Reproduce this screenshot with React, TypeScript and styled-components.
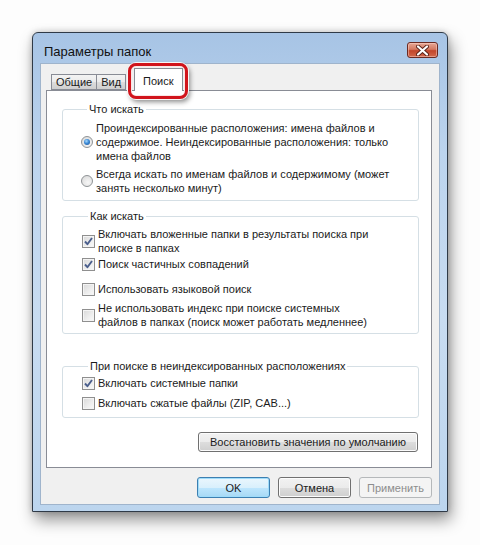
import styled, { createGlobalStyle } from 'styled-components'

const GlobalStyle = createGlobalStyle`
  html, body {
    margin: 0;
    background: #fdfdfd;
  }
  body {
    font-family: "Liberation Sans", Arial, sans-serif;
    font-size: 11px;
    color: #1b1b1b;
  }
`;

const Page = styled.div`
  width: 480px;
  height: 545px;
  padding: 32px 0 0 32px;
  box-sizing: border-box;
`;

const Window = styled.div`
  width: 416px;
  height: 480px;
  box-sizing: border-box;
  border: 1px solid #2f3a47;
  border-radius: 6px 6px 0 0;
  background: linear-gradient(180deg, #a7c4e5 0%, #bcd4ee 25%, #c8dcf1 60%, #bcd5ee 100%);
  box-shadow: 3px 8px 16px rgba(0, 0, 0, 0.42), 0 0 6px rgba(0, 0, 0, 0.2);
  display: flex;
  flex-direction: column;
`;

const TitleBar = styled.div`
  height: 30px;
  display: flex;
  align-items: flex-start;
  justify-content: space-between;
  padding: 0 9px 0 11px;
`;

const Title = styled.span`
  margin-top: 11px;
  font-size: 13px;
  line-height: 15px;
  color: #111;
`;

const CloseButton = styled.div`
  margin-top: 9px;
  width: 31px;
  height: 16px;
  box-sizing: border-box;
  border: 1px solid #6b2a22;
  border-radius: 3px;
  background: linear-gradient(180deg, #e7a795 0%, #d57a62 45%, #c2452a 55%, #d2684c 100%);
  box-shadow: inset 0 0 0 1px rgba(255, 220, 210, 0.45);
  display: flex;
  align-items: center;
  justify-content: center;
`;

const Client = styled.div`
  flex: 1;
  margin: 0 7px 6px 7px;
  border: 1px solid #9fb4cc;
  background: #f0f0f0;
  padding: 0 7px 0 5px;
  display: flex;
  flex-direction: column;
`;

const TabRow = styled.div`
  height: 26px;
  display: flex;
  align-items: flex-end;
  padding-left: 5px;
`;

const Tab = styled.div<{ $active?: boolean }>`
  position: relative;
  box-sizing: border-box;
  height: ${({ $active }) => ($active ? '23px' : '16px')};
  padding: ${({ $active }) => ($active ? '2px 8px 0' : '0 4px')};
  margin: ${({ $active }) => ($active ? '0 0 -1px 8px' : '0')};
  border: 1px solid #898c95;
  border-bottom: ${({ $active }) => ($active ? 'none' : '1px solid #898c95')};
  border-right: ${({ $active }) => ($active ? '1px solid #898c95' : 'none')};
  background: ${({ $active }) =>
    $active ? '#fff' : 'linear-gradient(180deg, #f3f3f3 0%, #ebebeb 50%, #dddddd 51%, #cfcfcf 100%)'};
  z-index: ${({ $active }) => ($active ? 2 : 1)};
  line-height: 14px;
  display: flex;
  align-items: center;
  color: #1b1b1b;
`;

const LastTab = styled(Tab)`
  border-right: 1px solid #898c95;
`;

const Highlight = styled.div`
  position: absolute;
  left: -7px;
  right: -6px;
  top: -6px;
  bottom: -8px;
  border: 3px solid #d1141c;
  border-radius: 8px;
  box-shadow: 0 0 0 1px #f6f6f6, 2px 3px 5px rgba(0, 0, 0, 0.45), inset 0 0 0 1px #fbe5e5;
  pointer-events: none;
`;

const Panel = styled.div`
  height: 378px;
  box-sizing: border-box;
  border: 1px solid #898c95;
  background: #fff;
  padding: 11px 12px 0 15px;
  display: flex;
  flex-direction: column;
`;

const Group = styled.fieldset<{ $top: number; $pad: string }>`
  margin: ${({ $top }) => `${$top}px 0 0 0`};
  padding: ${({ $pad }) => $pad};
  border: 1px solid #d5dfe5;
  border-radius: 3px;
  min-inline-size: 0;
  display: flex;
  flex-direction: column;
`;

const Legend = styled.legend`
  margin-left: 6px;
  padding: 0 2px;
  line-height: 14px;
  color: #1b1b1b;
`;

const Option = styled.label<{ $gap?: number }>`
  display: flex;
  align-items: center;
  gap: 3px;
  margin-top: ${({ $gap }) => $gap ?? 0}px;
  line-height: 14px;
  color: #1b1b1b;
`;

const OptionText = styled.span`
  flex: 1;
`;

const RadioMark = styled.span<{ $on?: boolean }>`
  flex: none;
  width: 12px;
  height: 12px;
  box-sizing: border-box;
  border-radius: 50%;
  border: 1px solid #8f9396;
  background: radial-gradient(circle at 60% 65%, #f7f7f7 0%, #e0e0e0 70%, #cfcfcf 100%);
  display: flex;
  align-items: center;
  justify-content: center;
  &::after {
    content: '';
    display: ${({ $on }) => ($on ? 'block' : 'none')};
    width: 6px;
    height: 6px;
    border-radius: 50%;
    background: radial-gradient(circle at 40% 35%, #a9dbff 0%, #3c8ad6 45%, #1b4f8f 100%);
  }
`;

const CheckMark = styled.span`
  flex: none;
  width: 13px;
  height: 13px;
  box-sizing: border-box;
  border: 1px solid #8f8f8f;
  background: linear-gradient(135deg, #d8d8d8 0%, #eeeeee 60%, #fafafa 100%);
  box-shadow: inset 0 0 0 1px #f4f4f4;
  display: flex;
  align-items: center;
  justify-content: center;
`;

const Button = styled.button<{ $variant?: 'default' | 'disabled' }>`
  box-sizing: border-box;
  height: 21px;
  width: 73px;
  padding: 0;
  font-family: inherit;
  font-size: 11px;
  border-radius: 3px;
  border: 1px solid
    ${({ $variant }) => ($variant === 'default' ? '#3c7fb1' : $variant === 'disabled' ? '#b5b8ba' : '#707070')};
  color: ${({ $variant }) => ($variant === 'disabled' ? '#8d8d8d' : '#1b1b1b')};
  background: ${({ $variant }) =>
    $variant === 'default'
      ? 'linear-gradient(180deg, #eaf6fd 0%, #d9f0fc 50%, #bee6fd 51%, #a7d9f5 100%)'
      : $variant === 'disabled'
      ? '#f4f4f4'
      : 'linear-gradient(180deg, #f2f2f2 0%, #ebebeb 50%, #dddddd 51%, #cfcfcf 100%)'};
  box-shadow: ${({ $variant }) =>
    $variant === 'default' ? 'inset 0 0 0 1px #9fdcfa' : $variant === 'disabled' ? 'none' : 'inset 0 0 0 1px #fcfcfc'};
`;

const RestoreButton = styled(Button)`
  width: 220px;
  height: 20px;
  align-self: flex-end;
  margin: 14px 1px 0 0;
`;

const ButtonRow = styled.div`
  display: flex;
  justify-content: flex-end;
  gap: 8px;
  margin-top: 9px;
`;

const Check = () => (
  <svg width="9" height="9" viewBox="0 0 9 9">
    <path d="M1 4.5 L3.4 7.2 L8 1" fill="none" stroke="#4a5e8c" strokeWidth="1.9" strokeLinejoin="round" />
  </svg>
);

function Checkbox({ on }: { on?: boolean }) {
  return <CheckMark>{on && <Check />}</CheckMark>;
}

export default function App() {
  return (
    <Page>
      <GlobalStyle />
      <Window>
        <TitleBar>
          <Title>Параметры папок</Title>
          <CloseButton>
            <svg width="13" height="11" viewBox="0 0 13 11">
              <path
                d="M2 1.5 L11 9.5 M11 1.5 L2 9.5"
                stroke="#5a2218"
                strokeWidth="4"
                strokeLinecap="round"
              />
              <path d="M2 1.5 L11 9.5 M11 1.5 L2 9.5" stroke="#fff" strokeWidth="2.2" strokeLinecap="round" />
            </svg>
          </CloseButton>
        </TitleBar>
        <Client>
          <TabRow>
            <Tab>Общие</Tab>
            <LastTab>Вид</LastTab>
            <Tab $active>
              Поиск
              <Highlight />
            </Tab>
          </TabRow>
          <Panel>
            <Group $top={0} $pad="5px 4px 5px 18px">
              <Legend>Что искать</Legend>
              <Option>
                <RadioMark $on />
                <OptionText>
                  Проиндексированные расположения: имена файлов и
                  <br />
                  содержимое. Неиндексированные расположения: только
                  <br />
                  имена файлов
                </OptionText>
              </Option>
              <Option $gap={4}>
                <RadioMark />
                <OptionText>
                  Всегда искать по именам файлов и содержимому (может
                  <br />
                  занять несколько минут)
                </OptionText>
              </Option>
            </Group>
            <Group $top={8} $pad="4px 4px 4px 19px">
              <Legend>Как искать</Legend>
              <Option>
                <Checkbox on />
                <OptionText>
                  Включать вложенные папки в результаты поиска при
                  <br />
                  поиске в папках
                </OptionText>
              </Option>
              <Option $gap={2}>
                <Checkbox on />
                <OptionText>Поиск частичных совпадений</OptionText>
              </Option>
              <Option $gap={11}>
                <Checkbox />
                <OptionText>Использовать языковой поиск</OptionText>
              </Option>
              <Option $gap={5}>
                <Checkbox />
                <OptionText>
                  Не использовать индекс при поиске системных
                  <br />
                  файлов в папках (поиск может работать медленнее)
                </OptionText>
              </Option>
            </Group>
            <Group $top={25} $pad="3px 4px 7px 19px">
              <Legend>При поиске в неиндексированных расположениях</Legend>
              <Option>
                <Checkbox on />
                <OptionText>Включать системные папки</OptionText>
              </Option>
              <Option $gap={6}>
                <Checkbox />
                <OptionText>Включать сжатые файлы (ZIP, CAB...)</OptionText>
              </Option>
            </Group>
            <RestoreButton>Восстановить значения по умолчанию</RestoreButton>
          </Panel>
          <ButtonRow>
            <Button $variant="default">OK</Button>
            <Button>Отмена</Button>
            <Button $variant="disabled">Применить</Button>
          </ButtonRow>
        </Client>
      </Window>
    </Page>
  )
}
